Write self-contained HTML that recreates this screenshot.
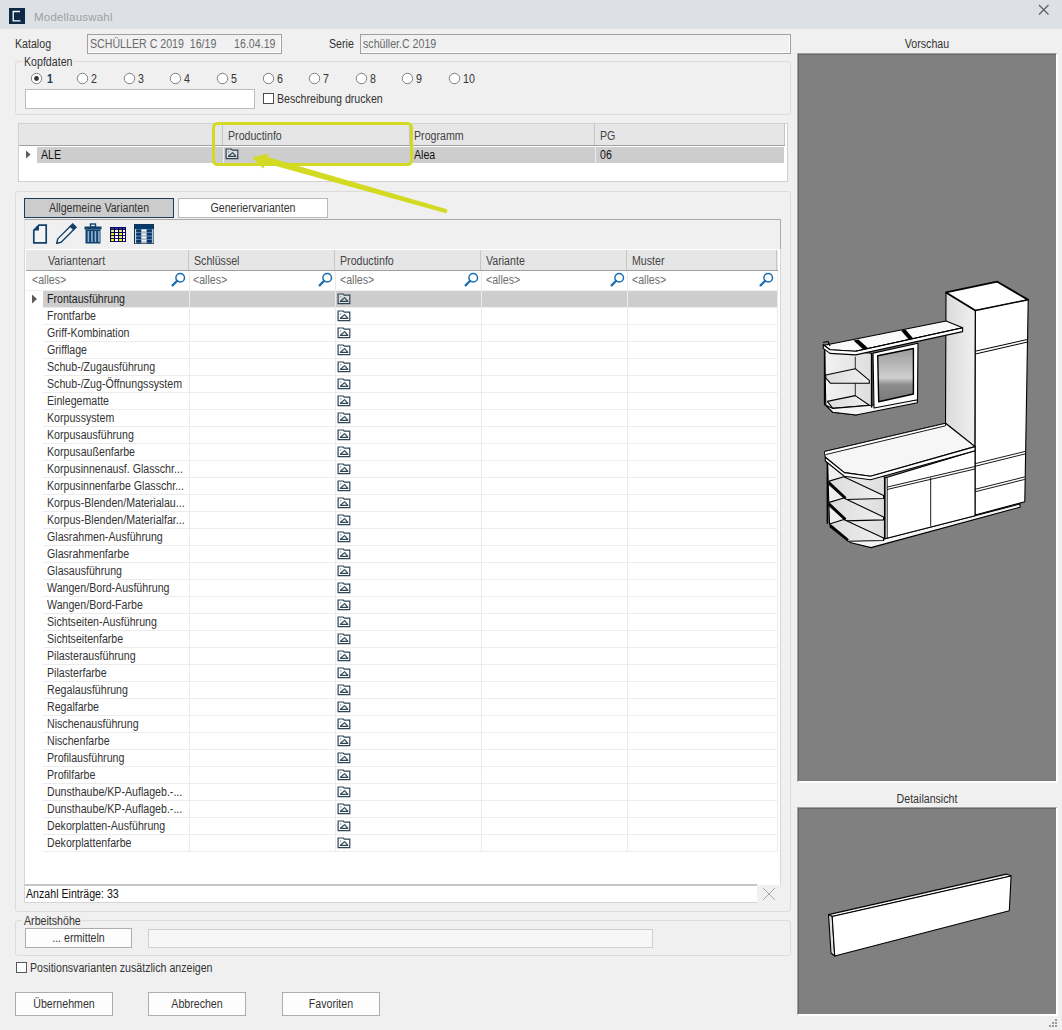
<!DOCTYPE html><html><head><meta charset="utf-8"><style>
*{box-sizing:border-box}
html,body{margin:0;padding:0}
body{width:1062px;height:1030px;position:relative;overflow:hidden;background:#f0f0f0;font-family:"Liberation Sans",sans-serif;font-size:12.5px;letter-spacing:0;color:#333}
div{position:absolute}
.t{line-height:14px;white-space:nowrap;transform:scaleX(.85);transform-origin:0 0}
.tc{line-height:14px;white-space:nowrap;text-align:center;transform:scaleX(.85);transform-origin:50% 0}
.grp{border:1px solid #dcdcdc;border-radius:3px}
.inp{border:1px solid #a0a0a0;background:#f1f1f1;box-shadow:inset -1px -1px 0 #fff}
.btn{border:1px solid #adadad;background:#fdfdfd;text-align:center;line-height:21px}
.vl{width:1px;background:#ebebeb}
.hl{height:1px;background:#ececec}
.pi{position:absolute}
.mag{position:absolute}
</style></head><body>

<div style="left:0;top:0;width:1062px;height:29px;background:#dde0e5"></div>
<div style="left:9px;top:8px;width:16px;height:16px;background:#0c2a47"></div>
<svg style="position:absolute;left:9px;top:8px" width="16" height="16"><path d="M11 3.5H4.2V12.8H11.5" fill="none" stroke="#fff" stroke-width="1.3"/></svg>
<div class="t" style="left:34px;top:10px;font-size:11.5px;letter-spacing:0.2px;color:#a0a0a0;transform:none">Modellauswahl</div>
<svg style="position:absolute;left:1038px;top:4px" width="12" height="12"><path d="M1 1L10.5 10.5M10.5 1L1 10.5" stroke="#5a5a5a" stroke-width="1.1"/></svg>
<div class="t" style="left:15px;top:37px;">Katalog</div>
<div class="inp" style="left:87px;top:34px;width:195px;height:20px"></div>
<div class="t" style="left:90px;top:37px;color:#6a6a6a">SCHÜLLER C 2019&nbsp;&nbsp;16/19&nbsp;&nbsp;&nbsp;&nbsp;&nbsp; 16.04.19</div>
<div class="t" style="left:329px;top:37px;">Serie</div>
<div class="inp" style="left:360px;top:34px;width:431px;height:20px"></div>
<div class="t" style="left:363px;top:37px;color:#6a6a6a">schüller.C 2019</div>
<div class="grp" style="left:15px;top:61px;width:776px;height:54px"></div>
<div style="left:22px;top:56px;width:52px;height:12px;background:#f0f0f0"></div>
<div class="t" style="left:24px;top:55px;">Kopfdaten</div>
<svg style="position:absolute;left:30.0px;top:72px" width="13" height="13"><circle cx="6.5" cy="6.5" r="5.2" fill="#fff" stroke="#6a6a6a" stroke-width="0.85"/><circle cx="6.5" cy="6.5" r="2.4" fill="#333"/></svg>
<div class="t" style="left:46.5px;top:72px;font-weight:bold;color:#1d3c5a">1</div>
<svg style="position:absolute;left:76.4px;top:72px" width="13" height="13"><circle cx="6.5" cy="6.5" r="5.2" fill="#fff" stroke="#6a6a6a" stroke-width="0.85"/></svg>
<div class="t" style="left:91.4px;top:72px;">2</div>
<svg style="position:absolute;left:122.8px;top:72px" width="13" height="13"><circle cx="6.5" cy="6.5" r="5.2" fill="#fff" stroke="#6a6a6a" stroke-width="0.85"/></svg>
<div class="t" style="left:137.8px;top:72px;">3</div>
<svg style="position:absolute;left:169.2px;top:72px" width="13" height="13"><circle cx="6.5" cy="6.5" r="5.2" fill="#fff" stroke="#6a6a6a" stroke-width="0.85"/></svg>
<div class="t" style="left:184.2px;top:72px;">4</div>
<svg style="position:absolute;left:215.6px;top:72px" width="13" height="13"><circle cx="6.5" cy="6.5" r="5.2" fill="#fff" stroke="#6a6a6a" stroke-width="0.85"/></svg>
<div class="t" style="left:230.6px;top:72px;">5</div>
<svg style="position:absolute;left:262.0px;top:72px" width="13" height="13"><circle cx="6.5" cy="6.5" r="5.2" fill="#fff" stroke="#6a6a6a" stroke-width="0.85"/></svg>
<div class="t" style="left:277.0px;top:72px;">6</div>
<svg style="position:absolute;left:308.4px;top:72px" width="13" height="13"><circle cx="6.5" cy="6.5" r="5.2" fill="#fff" stroke="#6a6a6a" stroke-width="0.85"/></svg>
<div class="t" style="left:323.4px;top:72px;">7</div>
<svg style="position:absolute;left:354.8px;top:72px" width="13" height="13"><circle cx="6.5" cy="6.5" r="5.2" fill="#fff" stroke="#6a6a6a" stroke-width="0.85"/></svg>
<div class="t" style="left:369.8px;top:72px;">8</div>
<svg style="position:absolute;left:401.2px;top:72px" width="13" height="13"><circle cx="6.5" cy="6.5" r="5.2" fill="#fff" stroke="#6a6a6a" stroke-width="0.85"/></svg>
<div class="t" style="left:416.2px;top:72px;">9</div>
<svg style="position:absolute;left:447.6px;top:72px" width="13" height="13"><circle cx="6.5" cy="6.5" r="5.2" fill="#fff" stroke="#6a6a6a" stroke-width="0.85"/></svg>
<div class="t" style="left:462.59999999999997px;top:72px;">10</div>
<div style="left:25px;top:89px;width:230px;height:20px;background:#fff;border:1px solid #bdbdbd"></div>
<div style="left:263px;top:93px;width:11px;height:11px;background:#fff;border:1px solid #4c4c4c"></div>
<div class="t" style="left:277px;top:92px;">Beschreibung drucken</div>
<div style="left:18px;top:123px;width:770px;height:59px;background:#fff;border:1px solid #d0d0d0"></div>
<div style="left:19px;top:124px;width:766px;height:22px;background:#e6e6e6;border-bottom:1px solid #a0a0a0"></div>
<div style="left:222px;top:124px;width:1px;height:21px;background:#c6c6c6"></div>
<div style="left:409px;top:124px;width:1px;height:21px;background:#c6c6c6"></div>
<div style="left:594px;top:124px;width:1px;height:21px;background:#c6c6c6"></div>
<div style="left:784px;top:124px;width:1px;height:21px;background:#c6c6c6"></div>
<div class="t" style="left:228px;top:129px;color:#444">Productinfo</div>
<div class="t" style="left:414px;top:129px;color:#444">Programm</div>
<div class="t" style="left:600px;top:129px;color:#444">PG</div>
<div style="left:37px;top:147px;width:747px;height:16px;background:#cdcdcd"></div>
<div style="left:223px;top:147px;width:1px;height:16px;background:#ececec"></div>
<div style="left:410px;top:147px;width:1px;height:16px;background:#ececec"></div>
<div style="left:595px;top:147px;width:1px;height:16px;background:#ececec"></div>
<svg style="position:absolute;left:25px;top:150px" width="8" height="9"><path d="M1 0.5L5.5 4.5L1 8.5z" fill="#5a5a5a"/></svg>
<div class="t" style="left:41px;top:148px;color:#111">ALE</div>
<svg class="pi" style="left:225px;top:148px" width="14" height="12" viewBox="0 0 14 12"><path d="M1.1 10.6V1H6.2L7.3 2.2H12.8V10.6z" fill="#f6f8fa" fill-opacity="0.35" stroke="#2e4556" stroke-width="1.2"/><path d="M3.4 8.3L7.6 4.6L10.9 8.3z" fill="none" stroke="#2e4556" stroke-width="1.15" stroke-linejoin="round"/><circle cx="3.6" cy="3.9" r="0.7" fill="#7a96aa"/></svg>
<div class="t" style="left:414px;top:148px;color:#111">Alea</div>
<div class="t" style="left:600px;top:148px;color:#111">06</div>
<div class="grp" style="left:15px;top:191px;width:776px;height:721px"></div>
<div style="left:24px;top:198px;width:150px;height:20px;background:#cccccc;border:1px solid #1d3a55"></div>
<div class="tc" style="left:24px;top:201px;width:150px;">Allgemeine Varianten</div>
<div style="left:178px;top:198px;width:150px;height:20px;background:#fff;border:1px solid #b9b9b9"></div>
<div class="tc" style="left:178px;top:201px;width:150px;">Generiervarianten</div>
<div style="left:24px;top:219px;width:757px;height:30px;border-top:1px solid #a9a9a9;border-right:1px solid #a9a9a9;border-left:1px solid #e2e2e2"></div>
<svg style="position:absolute;left:30px;top:222px" width="128" height="24" viewBox="0 0 128 24">
<path d="M9 3.2H16.2V20.8H3.8V8.4z" fill="#f4f4f4" stroke="#12416b" stroke-width="1.7"/>
<path d="M3 8.5L9 2.5V8.5z" fill="#12416b"/>
<g transform="translate(36,12) rotate(-45)">
<path d="M-9.3 -2.4H8.6V2.4H-9.3L-13.2 0z" fill="#f4f4f4" stroke="#12416b" stroke-width="1.4" stroke-linejoin="round"/>
<rect x="8" y="-3.1" width="4.6" height="6.2" fill="#12416b"/>
<path d="M-13.6 0L-11.2 -1.2V1.2z" fill="#12416b"/>
</g>
<rect x="54.5" y="4.5" width="17" height="3" fill="#12416b"/>
<rect x="60.5" y="2" width="5" height="3" fill="none" stroke="#12416b" stroke-width="1.4"/>
<rect x="55.5" y="7.5" width="15" height="14" fill="#12416b"/>
<rect x="57.6" y="9" width="1.6" height="11" fill="#8fb5d6"/>
<rect x="61.1" y="9" width="1.6" height="11" fill="#8fb5d6"/>
<rect x="64.6" y="9" width="1.6" height="11" fill="#8fb5d6"/>
<rect x="68.1" y="9" width="1.6" height="11" fill="#8fb5d6"/>

<rect x="80" y="5" width="16" height="15" fill="#000060"/><rect x="81.1" y="5.9" width="2.8" height="0.6" fill="#8080b0"/><rect x="81.1" y="7.9" width="2.8" height="2.1" fill="#f2f27a"/><rect x="81.1" y="11" width="2.8" height="2.1" fill="#ffff00"/><rect x="81.1" y="14" width="2.8" height="2.1" fill="#f2f27a"/><rect x="81.1" y="17" width="2.8" height="2.1" fill="#ffff00"/><rect x="85" y="5.9" width="3" height="0.6" fill="#8080b0"/><rect x="85" y="7.9" width="3" height="2.1" fill="#ffffff"/><rect x="85" y="11" width="3" height="2.1" fill="#ffffff"/><rect x="85" y="14" width="3" height="2.1" fill="#ffffff"/><rect x="85" y="17" width="3" height="2.1" fill="#ffffff"/><rect x="89.1" y="5.9" width="2.8" height="0.6" fill="#8080b0"/><rect x="89.1" y="7.9" width="2.8" height="2.1" fill="#f2f27a"/><rect x="89.1" y="11" width="2.8" height="2.1" fill="#ffff00"/><rect x="89.1" y="14" width="2.8" height="2.1" fill="#f2f27a"/><rect x="89.1" y="17" width="2.8" height="2.1" fill="#ffff00"/><rect x="93" y="5.9" width="2" height="0.6" fill="#8080b0"/><rect x="93" y="7.9" width="2" height="2.1" fill="#ffffff"/><rect x="93" y="11" width="2" height="2.1" fill="#ffffff"/><rect x="93" y="14" width="2" height="2.1" fill="#ffffff"/><rect x="93" y="17" width="2" height="2.1" fill="#ffffff"/>
<rect x="104" y="2" width="20" height="20" fill="#1b2f44"/>
<rect x="104.6" y="2.3" width="18.8" height="4.7" fill="#0a3a6c"/>
<rect x="105" y="7" width="18" height="14.3" fill="#4f82b0"/>
<rect x="105.2" y="7" width="1" height="14.3" fill="#eaf6fb"/>
<rect x="122.4" y="7" width="1" height="14.3" fill="#eaf6fb"/>
<g fill="#0a3563">
<rect x="106.2" y="7.6" width="4.8" height="2.3"/><rect x="106.2" y="11.1" width="4.8" height="2.4"/><rect x="106.2" y="14.8" width="4.8" height="2"/><rect x="106.2" y="18" width="4.8" height="2.6"/>
<rect x="116.9" y="7.6" width="4.9" height="2.3"/><rect x="116.9" y="11.1" width="4.9" height="2.4"/><rect x="116.9" y="14.8" width="4.9" height="2"/><rect x="116.9" y="18" width="4.9" height="2.6"/>
</g>
<rect x="111.3" y="7" width="5.3" height="14.3" fill="#b3bec8"/>
<g fill="#ffffff"><rect x="111.8" y="7.9" width="4.3" height="1.2"/><rect x="111.8" y="11.8" width="4.3" height="1"/><rect x="111.8" y="14.9" width="4.3" height="1.2"/><rect x="111.8" y="18.2" width="4.3" height="1"/></g>
</svg>
<div style="left:24px;top:249px;width:757px;height:636px;background:#fff;border-left:1px solid #d6d6d6;border-right:1px solid #d6d6d6"></div>
<div style="left:26px;top:250px;width:752px;height:21px;background:#e6e6e6;border-bottom:1px solid #a0a0a0"></div>
<div style="left:188px;top:250px;width:1px;height:20px;background:#c6c6c6"></div>
<div style="left:334px;top:250px;width:1px;height:20px;background:#c6c6c6"></div>
<div style="left:480px;top:250px;width:1px;height:20px;background:#c6c6c6"></div>
<div style="left:626px;top:250px;width:1px;height:20px;background:#c6c6c6"></div>
<div style="left:776px;top:250px;width:1px;height:20px;background:#c6c6c6"></div>
<div class="t" style="left:48px;top:254px;color:#444">Variantenart</div>
<div class="t" style="left:194px;top:254px;color:#444">Schlüssel</div>
<div class="t" style="left:340px;top:254px;color:#444">Productinfo</div>
<div class="t" style="left:486px;top:254px;color:#444">Variante</div>
<div class="t" style="left:632px;top:254px;color:#444">Muster</div>
<div class="t" style="left:32px;top:273px;color:#6d6d6d">&lt;alles&gt;</div>
<div class="t" style="left:193px;top:273px;color:#6d6d6d">&lt;alles&gt;</div>
<div class="t" style="left:340px;top:273px;color:#6d6d6d">&lt;alles&gt;</div>
<div class="t" style="left:486px;top:273px;color:#6d6d6d">&lt;alles&gt;</div>
<div class="t" style="left:632px;top:273px;color:#6d6d6d">&lt;alles&gt;</div>
<svg class="mag" style="left:171px;top:272px" width="15" height="15" viewBox="0 0 15 15"><circle cx="9.2" cy="5.8" r="4.3" fill="none" stroke="#1b6db0" stroke-width="1.5"/><path d="M6.2 8.8L1.6 13.4" stroke="#1b6db0" stroke-width="2.2" stroke-linecap="round"/></svg>
<svg class="mag" style="left:318px;top:272px" width="15" height="15" viewBox="0 0 15 15"><circle cx="9.2" cy="5.8" r="4.3" fill="none" stroke="#1b6db0" stroke-width="1.5"/><path d="M6.2 8.8L1.6 13.4" stroke="#1b6db0" stroke-width="2.2" stroke-linecap="round"/></svg>
<svg class="mag" style="left:464px;top:272px" width="15" height="15" viewBox="0 0 15 15"><circle cx="9.2" cy="5.8" r="4.3" fill="none" stroke="#1b6db0" stroke-width="1.5"/><path d="M6.2 8.8L1.6 13.4" stroke="#1b6db0" stroke-width="2.2" stroke-linecap="round"/></svg>
<svg class="mag" style="left:610px;top:272px" width="15" height="15" viewBox="0 0 15 15"><circle cx="9.2" cy="5.8" r="4.3" fill="none" stroke="#1b6db0" stroke-width="1.5"/><path d="M6.2 8.8L1.6 13.4" stroke="#1b6db0" stroke-width="2.2" stroke-linecap="round"/></svg>
<svg class="mag" style="left:759px;top:272px" width="15" height="15" viewBox="0 0 15 15"><circle cx="9.2" cy="5.8" r="4.3" fill="none" stroke="#1b6db0" stroke-width="1.5"/><path d="M6.2 8.8L1.6 13.4" stroke="#1b6db0" stroke-width="2.2" stroke-linecap="round"/></svg>
<div class="hl" style="left:26px;top:290px;width:752px;background:#f0f0f0"></div>
<div style="left:43px;top:291px;width:734px;height:16px;background:#cdcdcd"></div>
<svg style="position:absolute;left:31px;top:294px" width="8" height="10"><path d="M1 0.5L6 5L1 9.5z" fill="#5a5a5a"/></svg>
<div class="hl" style="left:43px;top:307px;width:734px"></div>
<div class="t" style="left:47px;top:292px;color:#1e1e1e">Frontausführung</div>
<svg class="pi" style="left:337px;top:292.5px" width="14" height="12" viewBox="0 0 14 12"><path d="M1.1 10.6V1H6.2L7.3 2.2H12.8V10.6z" fill="#f6f8fa" fill-opacity="0.35" stroke="#2e4556" stroke-width="1.2"/><path d="M3.4 8.3L7.6 4.6L10.9 8.3z" fill="none" stroke="#2e4556" stroke-width="1.15" stroke-linejoin="round"/><circle cx="3.6" cy="3.9" r="0.7" fill="#7a96aa"/></svg>
<div class="hl" style="left:43px;top:324px;width:734px"></div>
<div class="t" style="left:47px;top:309px;">Frontfarbe</div>
<svg class="pi" style="left:337px;top:309.5px" width="14" height="12" viewBox="0 0 14 12"><path d="M1.1 10.6V1H6.2L7.3 2.2H12.8V10.6z" fill="#f6f8fa" fill-opacity="0.35" stroke="#2e4556" stroke-width="1.2"/><path d="M3.4 8.3L7.6 4.6L10.9 8.3z" fill="none" stroke="#2e4556" stroke-width="1.15" stroke-linejoin="round"/><circle cx="3.6" cy="3.9" r="0.7" fill="#7a96aa"/></svg>
<div class="hl" style="left:43px;top:341px;width:734px"></div>
<div class="t" style="left:47px;top:326px;">Griff-Kombination</div>
<svg class="pi" style="left:337px;top:326.5px" width="14" height="12" viewBox="0 0 14 12"><path d="M1.1 10.6V1H6.2L7.3 2.2H12.8V10.6z" fill="#f6f8fa" fill-opacity="0.35" stroke="#2e4556" stroke-width="1.2"/><path d="M3.4 8.3L7.6 4.6L10.9 8.3z" fill="none" stroke="#2e4556" stroke-width="1.15" stroke-linejoin="round"/><circle cx="3.6" cy="3.9" r="0.7" fill="#7a96aa"/></svg>
<div class="hl" style="left:43px;top:358px;width:734px"></div>
<div class="t" style="left:47px;top:343px;">Grifflage</div>
<svg class="pi" style="left:337px;top:343.5px" width="14" height="12" viewBox="0 0 14 12"><path d="M1.1 10.6V1H6.2L7.3 2.2H12.8V10.6z" fill="#f6f8fa" fill-opacity="0.35" stroke="#2e4556" stroke-width="1.2"/><path d="M3.4 8.3L7.6 4.6L10.9 8.3z" fill="none" stroke="#2e4556" stroke-width="1.15" stroke-linejoin="round"/><circle cx="3.6" cy="3.9" r="0.7" fill="#7a96aa"/></svg>
<div class="hl" style="left:43px;top:375px;width:734px"></div>
<div class="t" style="left:47px;top:360px;">Schub-/Zugausführung</div>
<svg class="pi" style="left:337px;top:360.5px" width="14" height="12" viewBox="0 0 14 12"><path d="M1.1 10.6V1H6.2L7.3 2.2H12.8V10.6z" fill="#f6f8fa" fill-opacity="0.35" stroke="#2e4556" stroke-width="1.2"/><path d="M3.4 8.3L7.6 4.6L10.9 8.3z" fill="none" stroke="#2e4556" stroke-width="1.15" stroke-linejoin="round"/><circle cx="3.6" cy="3.9" r="0.7" fill="#7a96aa"/></svg>
<div class="hl" style="left:43px;top:392px;width:734px"></div>
<div class="t" style="left:47px;top:377px;">Schub-/Zug-Öffnungssystem</div>
<svg class="pi" style="left:337px;top:377.5px" width="14" height="12" viewBox="0 0 14 12"><path d="M1.1 10.6V1H6.2L7.3 2.2H12.8V10.6z" fill="#f6f8fa" fill-opacity="0.35" stroke="#2e4556" stroke-width="1.2"/><path d="M3.4 8.3L7.6 4.6L10.9 8.3z" fill="none" stroke="#2e4556" stroke-width="1.15" stroke-linejoin="round"/><circle cx="3.6" cy="3.9" r="0.7" fill="#7a96aa"/></svg>
<div class="hl" style="left:43px;top:409px;width:734px"></div>
<div class="t" style="left:47px;top:394px;">Einlegematte</div>
<svg class="pi" style="left:337px;top:394.5px" width="14" height="12" viewBox="0 0 14 12"><path d="M1.1 10.6V1H6.2L7.3 2.2H12.8V10.6z" fill="#f6f8fa" fill-opacity="0.35" stroke="#2e4556" stroke-width="1.2"/><path d="M3.4 8.3L7.6 4.6L10.9 8.3z" fill="none" stroke="#2e4556" stroke-width="1.15" stroke-linejoin="round"/><circle cx="3.6" cy="3.9" r="0.7" fill="#7a96aa"/></svg>
<div class="hl" style="left:43px;top:426px;width:734px"></div>
<div class="t" style="left:47px;top:411px;">Korpussystem</div>
<svg class="pi" style="left:337px;top:411.5px" width="14" height="12" viewBox="0 0 14 12"><path d="M1.1 10.6V1H6.2L7.3 2.2H12.8V10.6z" fill="#f6f8fa" fill-opacity="0.35" stroke="#2e4556" stroke-width="1.2"/><path d="M3.4 8.3L7.6 4.6L10.9 8.3z" fill="none" stroke="#2e4556" stroke-width="1.15" stroke-linejoin="round"/><circle cx="3.6" cy="3.9" r="0.7" fill="#7a96aa"/></svg>
<div class="hl" style="left:43px;top:443px;width:734px"></div>
<div class="t" style="left:47px;top:428px;">Korpusausführung</div>
<svg class="pi" style="left:337px;top:428.5px" width="14" height="12" viewBox="0 0 14 12"><path d="M1.1 10.6V1H6.2L7.3 2.2H12.8V10.6z" fill="#f6f8fa" fill-opacity="0.35" stroke="#2e4556" stroke-width="1.2"/><path d="M3.4 8.3L7.6 4.6L10.9 8.3z" fill="none" stroke="#2e4556" stroke-width="1.15" stroke-linejoin="round"/><circle cx="3.6" cy="3.9" r="0.7" fill="#7a96aa"/></svg>
<div class="hl" style="left:43px;top:460px;width:734px"></div>
<div class="t" style="left:47px;top:445px;">Korpusaußenfarbe</div>
<svg class="pi" style="left:337px;top:445.5px" width="14" height="12" viewBox="0 0 14 12"><path d="M1.1 10.6V1H6.2L7.3 2.2H12.8V10.6z" fill="#f6f8fa" fill-opacity="0.35" stroke="#2e4556" stroke-width="1.2"/><path d="M3.4 8.3L7.6 4.6L10.9 8.3z" fill="none" stroke="#2e4556" stroke-width="1.15" stroke-linejoin="round"/><circle cx="3.6" cy="3.9" r="0.7" fill="#7a96aa"/></svg>
<div class="hl" style="left:43px;top:477px;width:734px"></div>
<div class="t" style="left:47px;top:462px;">Korpusinnenausf. Glasschr...</div>
<svg class="pi" style="left:337px;top:462.5px" width="14" height="12" viewBox="0 0 14 12"><path d="M1.1 10.6V1H6.2L7.3 2.2H12.8V10.6z" fill="#f6f8fa" fill-opacity="0.35" stroke="#2e4556" stroke-width="1.2"/><path d="M3.4 8.3L7.6 4.6L10.9 8.3z" fill="none" stroke="#2e4556" stroke-width="1.15" stroke-linejoin="round"/><circle cx="3.6" cy="3.9" r="0.7" fill="#7a96aa"/></svg>
<div class="hl" style="left:43px;top:494px;width:734px"></div>
<div class="t" style="left:47px;top:479px;">Korpusinnenfarbe Glasschr...</div>
<svg class="pi" style="left:337px;top:479.5px" width="14" height="12" viewBox="0 0 14 12"><path d="M1.1 10.6V1H6.2L7.3 2.2H12.8V10.6z" fill="#f6f8fa" fill-opacity="0.35" stroke="#2e4556" stroke-width="1.2"/><path d="M3.4 8.3L7.6 4.6L10.9 8.3z" fill="none" stroke="#2e4556" stroke-width="1.15" stroke-linejoin="round"/><circle cx="3.6" cy="3.9" r="0.7" fill="#7a96aa"/></svg>
<div class="hl" style="left:43px;top:511px;width:734px"></div>
<div class="t" style="left:47px;top:496px;">Korpus-Blenden/Materialau...</div>
<svg class="pi" style="left:337px;top:496.5px" width="14" height="12" viewBox="0 0 14 12"><path d="M1.1 10.6V1H6.2L7.3 2.2H12.8V10.6z" fill="#f6f8fa" fill-opacity="0.35" stroke="#2e4556" stroke-width="1.2"/><path d="M3.4 8.3L7.6 4.6L10.9 8.3z" fill="none" stroke="#2e4556" stroke-width="1.15" stroke-linejoin="round"/><circle cx="3.6" cy="3.9" r="0.7" fill="#7a96aa"/></svg>
<div class="hl" style="left:43px;top:528px;width:734px"></div>
<div class="t" style="left:47px;top:513px;">Korpus-Blenden/Materialfar...</div>
<svg class="pi" style="left:337px;top:513.5px" width="14" height="12" viewBox="0 0 14 12"><path d="M1.1 10.6V1H6.2L7.3 2.2H12.8V10.6z" fill="#f6f8fa" fill-opacity="0.35" stroke="#2e4556" stroke-width="1.2"/><path d="M3.4 8.3L7.6 4.6L10.9 8.3z" fill="none" stroke="#2e4556" stroke-width="1.15" stroke-linejoin="round"/><circle cx="3.6" cy="3.9" r="0.7" fill="#7a96aa"/></svg>
<div class="hl" style="left:43px;top:545px;width:734px"></div>
<div class="t" style="left:47px;top:530px;">Glasrahmen-Ausführung</div>
<svg class="pi" style="left:337px;top:530.5px" width="14" height="12" viewBox="0 0 14 12"><path d="M1.1 10.6V1H6.2L7.3 2.2H12.8V10.6z" fill="#f6f8fa" fill-opacity="0.35" stroke="#2e4556" stroke-width="1.2"/><path d="M3.4 8.3L7.6 4.6L10.9 8.3z" fill="none" stroke="#2e4556" stroke-width="1.15" stroke-linejoin="round"/><circle cx="3.6" cy="3.9" r="0.7" fill="#7a96aa"/></svg>
<div class="hl" style="left:43px;top:562px;width:734px"></div>
<div class="t" style="left:47px;top:547px;">Glasrahmenfarbe</div>
<svg class="pi" style="left:337px;top:547.5px" width="14" height="12" viewBox="0 0 14 12"><path d="M1.1 10.6V1H6.2L7.3 2.2H12.8V10.6z" fill="#f6f8fa" fill-opacity="0.35" stroke="#2e4556" stroke-width="1.2"/><path d="M3.4 8.3L7.6 4.6L10.9 8.3z" fill="none" stroke="#2e4556" stroke-width="1.15" stroke-linejoin="round"/><circle cx="3.6" cy="3.9" r="0.7" fill="#7a96aa"/></svg>
<div class="hl" style="left:43px;top:579px;width:734px"></div>
<div class="t" style="left:47px;top:564px;">Glasausführung</div>
<svg class="pi" style="left:337px;top:564.5px" width="14" height="12" viewBox="0 0 14 12"><path d="M1.1 10.6V1H6.2L7.3 2.2H12.8V10.6z" fill="#f6f8fa" fill-opacity="0.35" stroke="#2e4556" stroke-width="1.2"/><path d="M3.4 8.3L7.6 4.6L10.9 8.3z" fill="none" stroke="#2e4556" stroke-width="1.15" stroke-linejoin="round"/><circle cx="3.6" cy="3.9" r="0.7" fill="#7a96aa"/></svg>
<div class="hl" style="left:43px;top:596px;width:734px"></div>
<div class="t" style="left:47px;top:581px;">Wangen/Bord-Ausführung</div>
<svg class="pi" style="left:337px;top:581.5px" width="14" height="12" viewBox="0 0 14 12"><path d="M1.1 10.6V1H6.2L7.3 2.2H12.8V10.6z" fill="#f6f8fa" fill-opacity="0.35" stroke="#2e4556" stroke-width="1.2"/><path d="M3.4 8.3L7.6 4.6L10.9 8.3z" fill="none" stroke="#2e4556" stroke-width="1.15" stroke-linejoin="round"/><circle cx="3.6" cy="3.9" r="0.7" fill="#7a96aa"/></svg>
<div class="hl" style="left:43px;top:613px;width:734px"></div>
<div class="t" style="left:47px;top:598px;">Wangen/Bord-Farbe</div>
<svg class="pi" style="left:337px;top:598.5px" width="14" height="12" viewBox="0 0 14 12"><path d="M1.1 10.6V1H6.2L7.3 2.2H12.8V10.6z" fill="#f6f8fa" fill-opacity="0.35" stroke="#2e4556" stroke-width="1.2"/><path d="M3.4 8.3L7.6 4.6L10.9 8.3z" fill="none" stroke="#2e4556" stroke-width="1.15" stroke-linejoin="round"/><circle cx="3.6" cy="3.9" r="0.7" fill="#7a96aa"/></svg>
<div class="hl" style="left:43px;top:630px;width:734px"></div>
<div class="t" style="left:47px;top:615px;">Sichtseiten-Ausführung</div>
<svg class="pi" style="left:337px;top:615.5px" width="14" height="12" viewBox="0 0 14 12"><path d="M1.1 10.6V1H6.2L7.3 2.2H12.8V10.6z" fill="#f6f8fa" fill-opacity="0.35" stroke="#2e4556" stroke-width="1.2"/><path d="M3.4 8.3L7.6 4.6L10.9 8.3z" fill="none" stroke="#2e4556" stroke-width="1.15" stroke-linejoin="round"/><circle cx="3.6" cy="3.9" r="0.7" fill="#7a96aa"/></svg>
<div class="hl" style="left:43px;top:647px;width:734px"></div>
<div class="t" style="left:47px;top:632px;">Sichtseitenfarbe</div>
<svg class="pi" style="left:337px;top:632.5px" width="14" height="12" viewBox="0 0 14 12"><path d="M1.1 10.6V1H6.2L7.3 2.2H12.8V10.6z" fill="#f6f8fa" fill-opacity="0.35" stroke="#2e4556" stroke-width="1.2"/><path d="M3.4 8.3L7.6 4.6L10.9 8.3z" fill="none" stroke="#2e4556" stroke-width="1.15" stroke-linejoin="round"/><circle cx="3.6" cy="3.9" r="0.7" fill="#7a96aa"/></svg>
<div class="hl" style="left:43px;top:664px;width:734px"></div>
<div class="t" style="left:47px;top:649px;">Pilasterausführung</div>
<svg class="pi" style="left:337px;top:649.5px" width="14" height="12" viewBox="0 0 14 12"><path d="M1.1 10.6V1H6.2L7.3 2.2H12.8V10.6z" fill="#f6f8fa" fill-opacity="0.35" stroke="#2e4556" stroke-width="1.2"/><path d="M3.4 8.3L7.6 4.6L10.9 8.3z" fill="none" stroke="#2e4556" stroke-width="1.15" stroke-linejoin="round"/><circle cx="3.6" cy="3.9" r="0.7" fill="#7a96aa"/></svg>
<div class="hl" style="left:43px;top:681px;width:734px"></div>
<div class="t" style="left:47px;top:666px;">Pilasterfarbe</div>
<svg class="pi" style="left:337px;top:666.5px" width="14" height="12" viewBox="0 0 14 12"><path d="M1.1 10.6V1H6.2L7.3 2.2H12.8V10.6z" fill="#f6f8fa" fill-opacity="0.35" stroke="#2e4556" stroke-width="1.2"/><path d="M3.4 8.3L7.6 4.6L10.9 8.3z" fill="none" stroke="#2e4556" stroke-width="1.15" stroke-linejoin="round"/><circle cx="3.6" cy="3.9" r="0.7" fill="#7a96aa"/></svg>
<div class="hl" style="left:43px;top:698px;width:734px"></div>
<div class="t" style="left:47px;top:683px;">Regalausführung</div>
<svg class="pi" style="left:337px;top:683.5px" width="14" height="12" viewBox="0 0 14 12"><path d="M1.1 10.6V1H6.2L7.3 2.2H12.8V10.6z" fill="#f6f8fa" fill-opacity="0.35" stroke="#2e4556" stroke-width="1.2"/><path d="M3.4 8.3L7.6 4.6L10.9 8.3z" fill="none" stroke="#2e4556" stroke-width="1.15" stroke-linejoin="round"/><circle cx="3.6" cy="3.9" r="0.7" fill="#7a96aa"/></svg>
<div class="hl" style="left:43px;top:715px;width:734px"></div>
<div class="t" style="left:47px;top:700px;">Regalfarbe</div>
<svg class="pi" style="left:337px;top:700.5px" width="14" height="12" viewBox="0 0 14 12"><path d="M1.1 10.6V1H6.2L7.3 2.2H12.8V10.6z" fill="#f6f8fa" fill-opacity="0.35" stroke="#2e4556" stroke-width="1.2"/><path d="M3.4 8.3L7.6 4.6L10.9 8.3z" fill="none" stroke="#2e4556" stroke-width="1.15" stroke-linejoin="round"/><circle cx="3.6" cy="3.9" r="0.7" fill="#7a96aa"/></svg>
<div class="hl" style="left:43px;top:732px;width:734px"></div>
<div class="t" style="left:47px;top:717px;">Nischenausführung</div>
<svg class="pi" style="left:337px;top:717.5px" width="14" height="12" viewBox="0 0 14 12"><path d="M1.1 10.6V1H6.2L7.3 2.2H12.8V10.6z" fill="#f6f8fa" fill-opacity="0.35" stroke="#2e4556" stroke-width="1.2"/><path d="M3.4 8.3L7.6 4.6L10.9 8.3z" fill="none" stroke="#2e4556" stroke-width="1.15" stroke-linejoin="round"/><circle cx="3.6" cy="3.9" r="0.7" fill="#7a96aa"/></svg>
<div class="hl" style="left:43px;top:749px;width:734px"></div>
<div class="t" style="left:47px;top:734px;">Nischenfarbe</div>
<svg class="pi" style="left:337px;top:734.5px" width="14" height="12" viewBox="0 0 14 12"><path d="M1.1 10.6V1H6.2L7.3 2.2H12.8V10.6z" fill="#f6f8fa" fill-opacity="0.35" stroke="#2e4556" stroke-width="1.2"/><path d="M3.4 8.3L7.6 4.6L10.9 8.3z" fill="none" stroke="#2e4556" stroke-width="1.15" stroke-linejoin="round"/><circle cx="3.6" cy="3.9" r="0.7" fill="#7a96aa"/></svg>
<div class="hl" style="left:43px;top:766px;width:734px"></div>
<div class="t" style="left:47px;top:751px;">Profilausführung</div>
<svg class="pi" style="left:337px;top:751.5px" width="14" height="12" viewBox="0 0 14 12"><path d="M1.1 10.6V1H6.2L7.3 2.2H12.8V10.6z" fill="#f6f8fa" fill-opacity="0.35" stroke="#2e4556" stroke-width="1.2"/><path d="M3.4 8.3L7.6 4.6L10.9 8.3z" fill="none" stroke="#2e4556" stroke-width="1.15" stroke-linejoin="round"/><circle cx="3.6" cy="3.9" r="0.7" fill="#7a96aa"/></svg>
<div class="hl" style="left:43px;top:783px;width:734px"></div>
<div class="t" style="left:47px;top:768px;">Profilfarbe</div>
<svg class="pi" style="left:337px;top:768.5px" width="14" height="12" viewBox="0 0 14 12"><path d="M1.1 10.6V1H6.2L7.3 2.2H12.8V10.6z" fill="#f6f8fa" fill-opacity="0.35" stroke="#2e4556" stroke-width="1.2"/><path d="M3.4 8.3L7.6 4.6L10.9 8.3z" fill="none" stroke="#2e4556" stroke-width="1.15" stroke-linejoin="round"/><circle cx="3.6" cy="3.9" r="0.7" fill="#7a96aa"/></svg>
<div class="hl" style="left:43px;top:800px;width:734px"></div>
<div class="t" style="left:47px;top:785px;">Dunsthaube/KP-Auflageb.-...</div>
<svg class="pi" style="left:337px;top:785.5px" width="14" height="12" viewBox="0 0 14 12"><path d="M1.1 10.6V1H6.2L7.3 2.2H12.8V10.6z" fill="#f6f8fa" fill-opacity="0.35" stroke="#2e4556" stroke-width="1.2"/><path d="M3.4 8.3L7.6 4.6L10.9 8.3z" fill="none" stroke="#2e4556" stroke-width="1.15" stroke-linejoin="round"/><circle cx="3.6" cy="3.9" r="0.7" fill="#7a96aa"/></svg>
<div class="hl" style="left:43px;top:817px;width:734px"></div>
<div class="t" style="left:47px;top:802px;">Dunsthaube/KP-Auflageb.-...</div>
<svg class="pi" style="left:337px;top:802.5px" width="14" height="12" viewBox="0 0 14 12"><path d="M1.1 10.6V1H6.2L7.3 2.2H12.8V10.6z" fill="#f6f8fa" fill-opacity="0.35" stroke="#2e4556" stroke-width="1.2"/><path d="M3.4 8.3L7.6 4.6L10.9 8.3z" fill="none" stroke="#2e4556" stroke-width="1.15" stroke-linejoin="round"/><circle cx="3.6" cy="3.9" r="0.7" fill="#7a96aa"/></svg>
<div class="hl" style="left:43px;top:834px;width:734px"></div>
<div class="t" style="left:47px;top:819px;">Dekorplatten-Ausführung</div>
<svg class="pi" style="left:337px;top:819.5px" width="14" height="12" viewBox="0 0 14 12"><path d="M1.1 10.6V1H6.2L7.3 2.2H12.8V10.6z" fill="#f6f8fa" fill-opacity="0.35" stroke="#2e4556" stroke-width="1.2"/><path d="M3.4 8.3L7.6 4.6L10.9 8.3z" fill="none" stroke="#2e4556" stroke-width="1.15" stroke-linejoin="round"/><circle cx="3.6" cy="3.9" r="0.7" fill="#7a96aa"/></svg>
<div class="hl" style="left:43px;top:851px;width:734px"></div>
<div class="t" style="left:47px;top:836px;">Dekorplattenfarbe</div>
<svg class="pi" style="left:337px;top:836.5px" width="14" height="12" viewBox="0 0 14 12"><path d="M1.1 10.6V1H6.2L7.3 2.2H12.8V10.6z" fill="#f6f8fa" fill-opacity="0.35" stroke="#2e4556" stroke-width="1.2"/><path d="M3.4 8.3L7.6 4.6L10.9 8.3z" fill="none" stroke="#2e4556" stroke-width="1.15" stroke-linejoin="round"/><circle cx="3.6" cy="3.9" r="0.7" fill="#7a96aa"/></svg>
<div class="vl" style="left:189px;top:271px;height:581px"></div>
<div class="vl" style="left:335px;top:271px;height:581px"></div>
<div class="vl" style="left:481px;top:271px;height:581px"></div>
<div class="vl" style="left:627px;top:271px;height:581px"></div>
<div class="vl" style="left:777px;top:271px;height:581px"></div>
<div style="left:24px;top:884px;width:733px;height:19px;background:#fff;border-top:2px solid #c6c6c6;border-left:1px solid #d6d6d6;border-bottom:1px solid #d6d6d6"></div>
<div class="t" style="left:26px;top:887px;color:#111">Anzahl Einträge: 33</div>
<svg style="position:absolute;left:762px;top:887px" width="14" height="14"><path d="M1 1L13 13M13 1L1 13" stroke="#a8a8a8" stroke-width="1"/></svg>
<div class="grp" style="left:15px;top:920px;width:776px;height:36px"></div>
<div style="left:22px;top:914px;width:60px;height:12px;background:#f0f0f0"></div>
<div class="t" style="left:24px;top:914px;">Arbeitshöhe</div>
<div class="btn" style="left:25px;top:928px;width:107px;height:20px"></div>
<div class="tc" style="left:25px;top:931px;width:107px;">... ermitteln</div>
<div style="left:148px;top:929px;width:505px;height:19px;background:#f7f7f7;border:1px solid #cfcfcf"></div>
<div style="left:16px;top:962px;width:11px;height:11px;background:#fff;border:1px solid #555"></div>
<div class="t" style="left:30px;top:961px;">Positionsvarianten zusätzlich anzeigen</div>
<div class="btn" style="left:15px;top:992px;width:98px;height:24px"></div>
<div class="tc" style="left:15px;top:997px;width:98px;">Übernehmen</div>
<div class="btn" style="left:148px;top:992px;width:98px;height:24px"></div>
<div class="tc" style="left:148px;top:997px;width:98px;">Abbrechen</div>
<div class="btn" style="left:282px;top:992px;width:98px;height:24px"></div>
<div class="tc" style="left:282px;top:997px;width:98px;">Favoriten</div>
<div class="tc" style="left:797px;top:37px;width:260px;">Vorschau</div>
<div style="left:797px;top:53px;width:261px;height:730px;background:#808080;border-top:1px solid #a0a0a0;border-left:1px solid #a0a0a0;border-right:2px solid #fff;border-bottom:2px solid #fff;box-shadow:inset 1px 1px 0 #696969"></div>
<div class="tc" style="left:797px;top:792px;width:260px;">Detailansicht</div>
<div style="left:797px;top:807px;width:261px;height:209px;background:#808080;border-top:1px solid #a0a0a0;border-left:1px solid #a0a0a0;border-right:2px solid #fff;border-bottom:2px solid #fff;box-shadow:inset 1px 1px 0 #696969"></div>
<svg style="position:absolute;left:0;top:0" width="1062" height="1030">
<defs>
<linearGradient id="sideg" x1="0" y1="0" x2="1" y2="0"><stop offset="0" stop-color="#dadada"/><stop offset="1" stop-color="#f0f0f0"/></linearGradient>
<linearGradient id="glass" x1="0" y1="0" x2="0" y2="1"><stop offset="0" stop-color="#9a9a9a"/><stop offset="0.55" stop-color="#d0d0d0"/><stop offset="0.68" stop-color="#8c8c8c"/><stop offset="1" stop-color="#787878"/></linearGradient>
<linearGradient id="shelfg" x1="0" y1="0" x2="1" y2="0"><stop offset="0" stop-color="#dcdcdc"/><stop offset="1" stop-color="#f0f0f0"/></linearGradient>
<linearGradient id="wallg" x1="0" y1="0" x2="1" y2="0"><stop offset="0" stop-color="#f2f2f2"/><stop offset="1" stop-color="#dedede"/></linearGradient>
</defs>
<g stroke="#000" stroke-width="1.1" stroke-linejoin="round">
<!-- tall cabinet -->
<path d="M946 292.4L975.4 310.6L975 446.6L945.5 423.3z" fill="url(#sideg)"/>
<path d="M946 292.4L997.3 281.7L1028.2 299.9L975.4 310.6z" fill="#fff" stroke-width="1.8"/>
<path d="M975.4 310.6L1028.2 299.9L1024.8 501.8L975 515z" fill="#fff"/>
<path d="M975.4 351.2L1027.7 339.4M975.4 354L1027.7 342" fill="none" stroke-width="1"/>
<path d="M975 463.7L1025.6 451.3M975 466.3L1025.6 453.8M975 489.3L1024.8 476.9M975 491.8L1024.8 479.4" fill="none" stroke-width="0.9"/>
<!-- plinth -->
<path d="M848.5 539.5L884.9 538.8L975 515.8L1020 504L1020 507.2L871 547.6L850 542.5z" fill="#f4f4f4"/>
<!-- base open shelf unit -->
<path d="M827.4 459.7L884.5 477L884.5 538.8L848.5 539.5L829.5 523.8z" fill="url(#wallg)"/>
<path d="M843.8 476.7V519.4" fill="none" stroke-width="0.6" stroke="#555"/>
<path d="M829.2 481.1L843.8 476.7L883.6 495.6L883.6 498.5L845.7 499.5L829.2 484.5z" fill="url(#shelfg)"/>
<path d="M829.2 502.4L843.8 498L883.6 517L883.6 519.9L845.7 520.9L829.2 505.8z" fill="url(#shelfg)"/>
<path d="M830.2 523.8L843.8 519.4L883.6 537.9L883.6 540.5L848.2 541.3L830.2 527z" fill="url(#shelfg)"/>
<path d="M827.4 459.7V523.8" fill="none" stroke-width="1.6"/>
<path d="M829.2 482.5L845.7 498M829.2 503.8L845.7 519.4M830.2 525.2L848.2 540" fill="none" stroke-width="2.2"/>
<!-- base front -->
<path d="M884.9 478L975 450.6L975 515.8L884.9 538.8z" fill="#fff"/>
<path d="M884.9 478V538.8M887.2 478V538.2" fill="none" stroke-width="0.9"/>
<path d="M887 487.1L975 466.5M887 489.5L975 469M930.7 477.5L930.7 526.4" fill="none" stroke-width="0.9"/>
<!-- countertop -->
<path d="M824.5 451.5L945.5 423.3L975 446.6L870.5 476.2L844.3 472.6L825.3 457.3z" fill="#f6f6f6"/>
<path d="M825.3 457.3L844.3 472.6L870.5 476.2L975 446.6L975 450.8L870.5 479.8L844.3 476.2L825.3 461z" fill="#fff"/>
<path d="M824.5 451.5L945.5 423.3L945.5 425.8L826 454.5" fill="#fff" stroke-width="0.9"/>
<!-- wall shelf unit -->
<path d="M824.6 349.3L871.6 353.2L871.6 407.6L856.1 415L832.8 412.3L825.8 405.3z" fill="url(#wallg)"/>
<path d="M855.3 356.7V395.6" fill="none" stroke-width="0.8"/>
<path d="M825.8 375L855.3 368.7L869.3 380.4L869.3 383.2L830.4 383.2L825.8 378.2z" fill="url(#shelfg)"/>
<path d="M827.3 401.4L855.3 395.6L869.3 405.3L832.8 408.4z" fill="url(#shelfg)"/>
<path d="M825.8 405.3L832.8 408.4L871.6 405.3L917.5 399.8L917.5 402.8L856.1 415L832.8 412.3z" fill="#f4f4f4"/>
<path d="M824.6 349.3V405.3" fill="none" stroke-width="1.5"/>
<path d="M871.6 353.2V407.6" fill="none" stroke-width="1.5"/>
<!-- glass door -->
<path d="M873 353.1L918 343.3L917.5 399.8L874 408z" fill="#fff"/>
<path d="M877.7 355.7L913.4 348.5L913.4 394L878.7 401.8z" fill="url(#glass)" stroke-width="1.4"/>
<!-- top shelf -->
<path d="M824.5 345.3L946.1 321L962.6 327.8L855.7 351.2L830 349.7L823.3 344.8z" fill="#fafafa"/>
<path d="M823.3 344.8L830 349.7L855.7 351.2L962.6 327.8L962.6 331.6L855.7 354.9L830 353.4L823.3 348.4z" fill="#fff"/>
<path d="M855.7 351.2L962.6 327.8" fill="none" stroke-width="0.8"/>
<path d="M853.5 340.6L858.5 339.5L868.5 348.6L863.5 349.7z" fill="#000" stroke="none"/>
<path d="M901 330.5L905.5 329.6L913.5 338.8L909 339.8z" fill="#000" stroke="none"/>
<path d="M823 342.5L828 341.5L830 346" fill="none" stroke-width="1.2"/>
<!-- plank in detail -->
<path d="M828.5 914.6L1006.4 874.1L1011.1 876L832.2 916.5z" fill="#f2f2f2"/>
<path d="M828.5 914.6L832.2 916.5L834.7 956L831 953z" fill="#e0e0e0"/>
<path d="M832.2 916.5L1011.1 876L1009.3 910.8L834.7 956z" fill="#fff"/>
</g>
</svg>

<svg style="position:absolute;left:0;top:0" width="1062" height="1030">
<rect x="213.5" y="123.5" width="198" height="41" rx="4" ry="4" fill="none" stroke="#d3da22" stroke-width="3"/>
<path d="M252 157.6L268.6 153.6L267.4 156.9L446.2 209.1A2 2 0 0 1 445.1 212.9L265.8 163.2L263.3 168.4Z" fill="#d3da22"/>
</svg>
<svg style="position:absolute;left:1049px;top:1019px" width="8" height="8"><g fill="#9a9a9a"><rect x="6" y="0" width="2" height="2"/><rect x="3" y="3" width="2" height="2"/><rect x="6" y="3" width="2" height="2"/><rect x="0" y="6" width="2" height="2"/><rect x="3" y="6" width="2" height="2"/><rect x="6" y="6" width="2" height="2"/></g></svg>
</body></html>
